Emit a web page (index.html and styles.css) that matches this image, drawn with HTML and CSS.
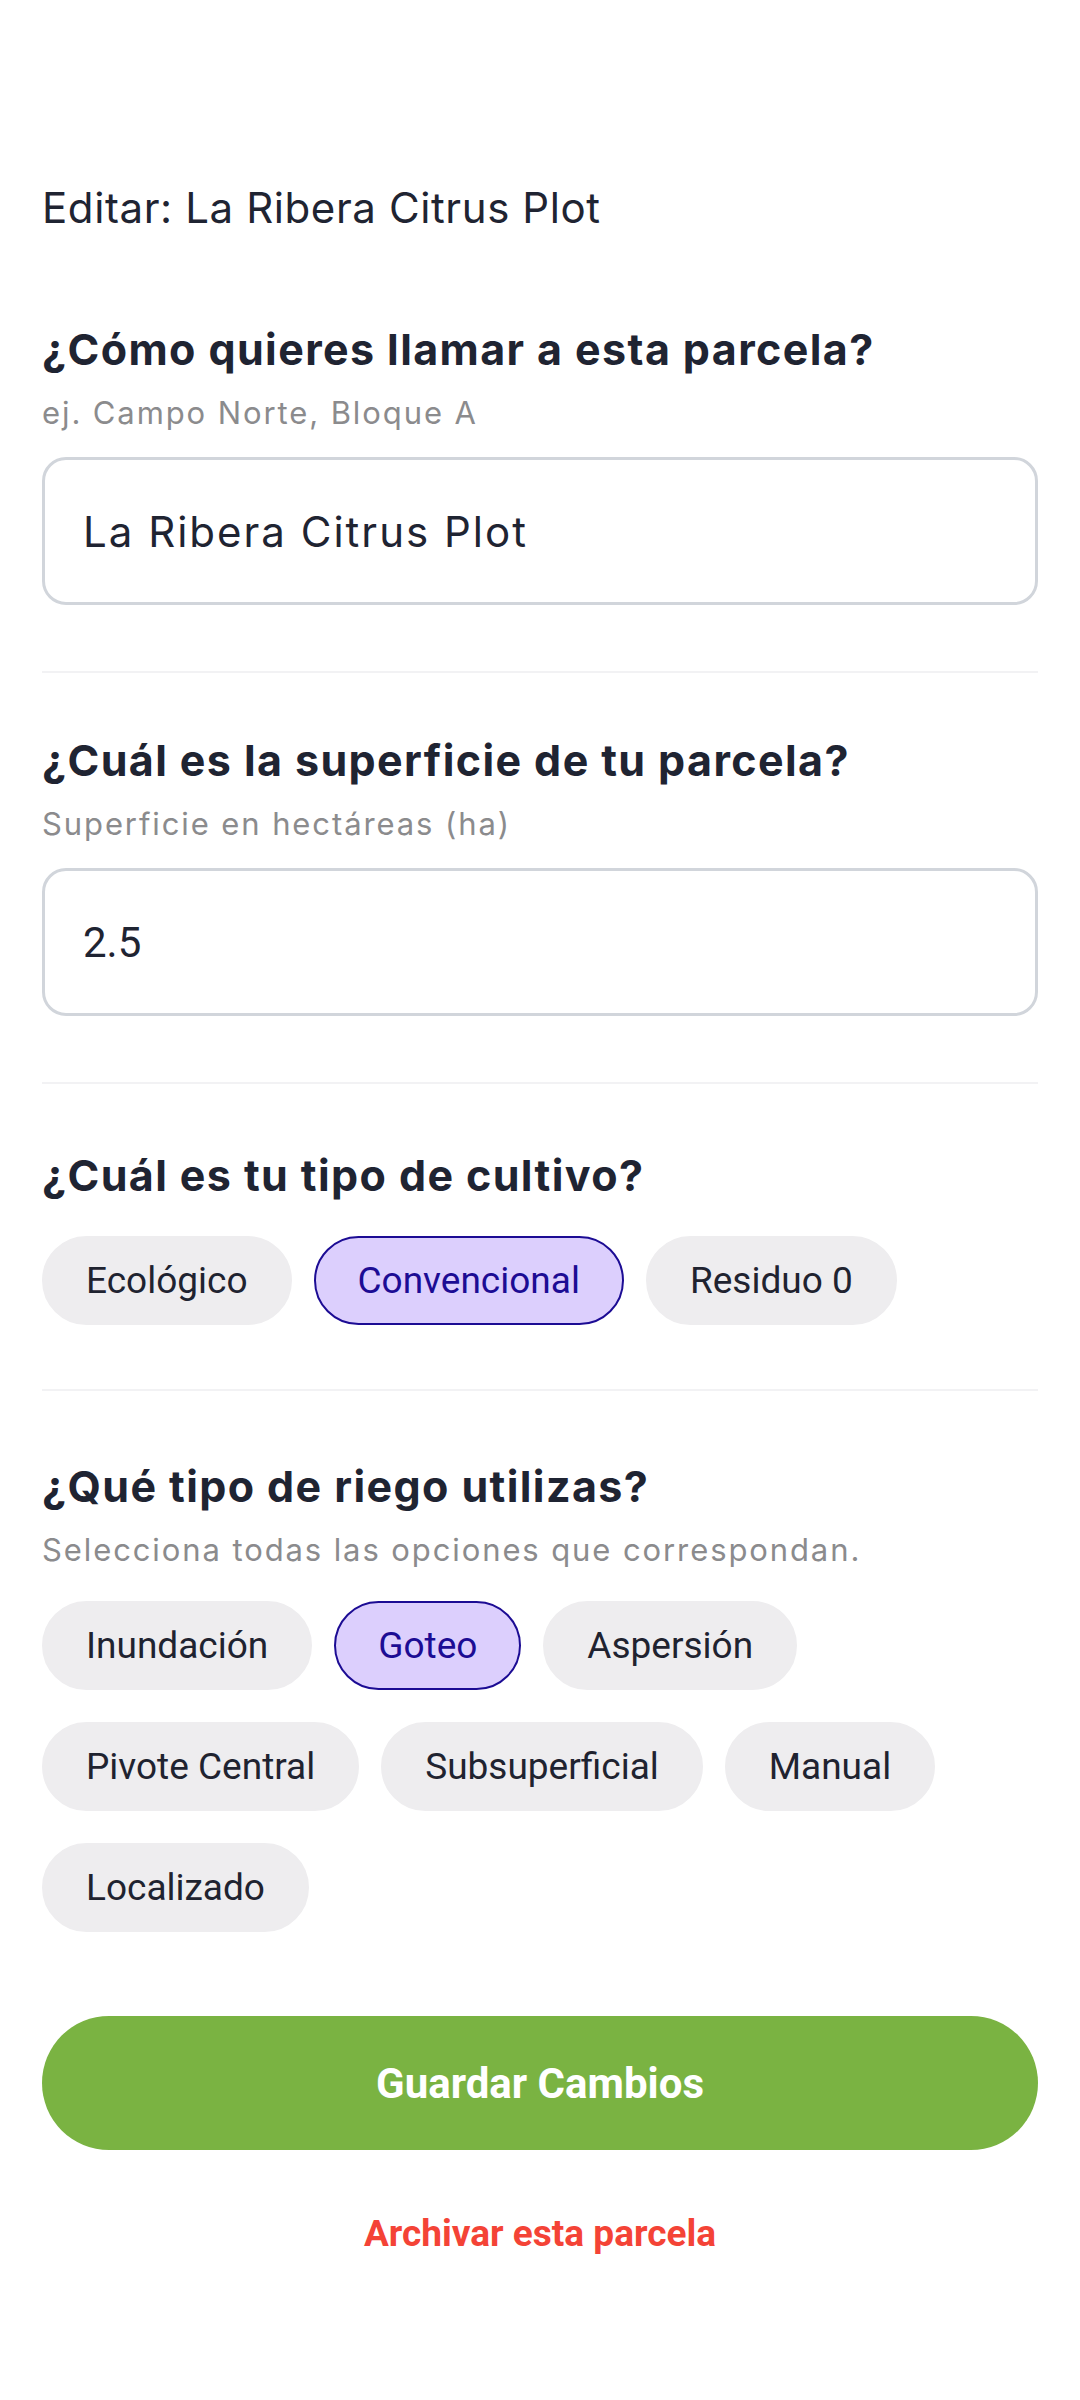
FILE: index.html
```html
<!DOCTYPE html>
<html lang="es">
<head>
<meta charset="utf-8">
<meta name="viewport" content="width=1080">
<title>Editar parcela</title>
<link rel="stylesheet" href="styles.css">
</head>
<body>
<main class="page">
  <h1 class="page-title">Editar: La Ribera Citrus Plot</h1>

  <section class="section">
    <h2 class="q-title">¿Cómo quieres llamar a esta parcela?</h2>
    <p class="q-hint">ej. Campo Norte, Bloque A</p>
    <input class="field field--text" type="text" value="La Ribera Citrus Plot">
  </section>

  <section class="section">
    <h2 class="q-title">¿Cuál es la superficie de tu parcela?</h2>
    <p class="q-hint">Superficie en hectáreas (ha)</p>
    <input class="field field--number" type="text" value="2.5">
  </section>

  <section class="section section--chips">
    <h2 class="q-title">¿Cuál es tu tipo de cultivo?</h2>
    <div class="chips">
      <button class="chip">Ecológico</button>
      <button class="chip chip--on">Convencional</button>
      <button class="chip">Residuo 0</button>
    </div>
  </section>

  <section class="section section--last">
    <h2 class="q-title">¿Qué tipo de riego utilizas?</h2>
    <p class="q-hint q-hint--chips">Selecciona todas las opciones que correspondan.</p>
    <div class="chips">
      <button class="chip">Inundación</button>
      <button class="chip chip--on">Goteo</button>
      <button class="chip">Aspersión</button>
      <button class="chip">Pivote Central</button>
      <button class="chip">Subsuperficial</button>
      <button class="chip">Manual</button>
      <button class="chip">Localizado</button>
    </div>
  </section>

  <button class="save">Guardar Cambios</button>
  <p class="archive">Archivar esta parcela</p>
</main>
</body>
</html>
```

FILE: styles.css
```css
* {
  box-sizing: border-box;
}

html, body {
  margin: 0;
  padding: 0;
  background: #ffffff;
}

body {
  font-family: "Inter", "Noto Sans", sans-serif;
  color: #1f2432;
}

.page {
  padding: 183px 42px 0;
}

.page-title {
  margin: 0 0 29px;
  font-size: 42px;
  line-height: 50px;
  font-weight: 400;
  letter-spacing: 0.6px;
  color: #1f2432;
}

.section {
  padding: 62px 0 66px;
  border-bottom: 2px solid #f2f2f4;
}

.section--chips {
  padding-top: 66px;
  padding-bottom: 64px;
}

.section--last {
  padding: 70px 0 0;
  border-bottom: none;
}

.q-title {
  margin: 0;
  font-size: 43px;
  line-height: 50px;
  font-weight: 700;
  letter-spacing: 1.4px;
  color: #1f2432;
}

.q-hint {
  margin: 20px 0 25px;
  font-size: 31px;
  line-height: 38px;
  font-weight: 400;
  letter-spacing: 1.9px;
  color: #8b8b8d;
}

.q-hint--chips {
  margin-bottom: 32px;
}

.section--chips .chips {
  margin-top: 36px;
}

.field {
  display: block;
  width: 100%;
  height: 148px;
  margin: 0;
  padding: 0 0 0 38px;
  border: 3px solid #d1d5db;
  border-radius: 24px;
  background: #ffffff;
  color: #1f2432;
  outline: none;
}

.field--text {
  font-family: "Inter", "Noto Sans", sans-serif;
  font-size: 42px;
  letter-spacing: 2px;
}

.field--number {
  font-family: "Roboto", "Liberation Sans", sans-serif;
  font-size: 42px;
}

.chips {
  display: flex;
  flex-wrap: wrap;
  column-gap: 22px;
  row-gap: 32px;
}

.chip {
  height: 89px;
  padding: 0 42px;
  border: 2px solid #eeedef;
  border-radius: 45px;
  background: #eeedef;
  font-family: "Roboto", "Liberation Sans", sans-serif;
  font-size: 37px;
  font-weight: 400;
  color: #1f2330;
  display: flex;
  align-items: center;
}

.chip--on {
  background: #dccffd;
  border-color: #1c0c94;
  color: #1c0c94;
}

.save {
  display: block;
  width: 100%;
  height: 134px;
  margin: 84px 0 0;
  border: none;
  border-radius: 67px;
  background: #7ab342;
  color: #ffffff;
  font-family: "Roboto", "Liberation Sans", sans-serif;
  font-size: 42px;
  font-weight: 700;
}

.archive {
  margin: 62px 0 0;
  text-align: center;
  font-family: "Roboto", "Liberation Sans", sans-serif;
  font-size: 37px;
  line-height: 44px;
  font-weight: 700;
  color: #f44336;
}
```
